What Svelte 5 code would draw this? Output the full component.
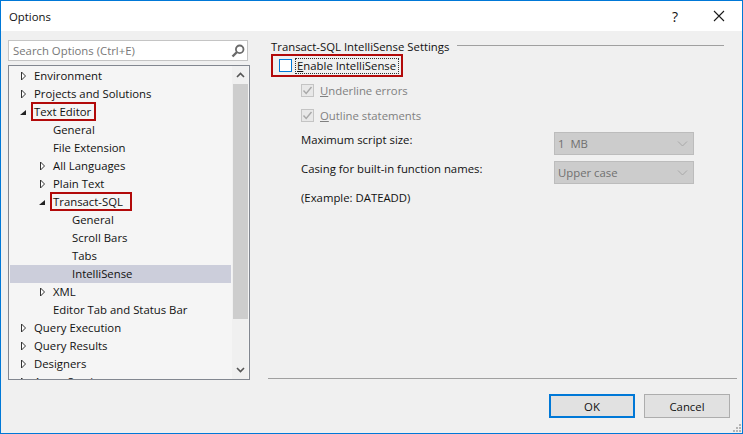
<script>
	const rows = [
		{ label: 'Environment', level: 0, arrow: 'closed' },
		{ label: 'Projects and Solutions', level: 0, arrow: 'closed' },
		{ label: 'Text Editor', level: 0, arrow: 'open', marked: true, pad: 3 },
		{ label: 'General', level: 1 },
		{ label: 'File Extension', level: 1 },
		{ label: 'All Languages', level: 1, arrow: 'closed' },
		{ label: 'Plain Text', level: 1, arrow: 'closed' },
		{ label: 'Transact-SQL', level: 1, arrow: 'open', marked: true, pad: 7 },
		{ label: 'General', level: 2 },
		{ label: 'Scroll Bars', level: 2 },
		{ label: 'Tabs', level: 2 },
		{ label: 'IntelliSense', level: 2, selected: true },
		{ label: 'XML', level: 1, arrow: 'closed' },
		{ label: 'Editor Tab and Status Bar', level: 1 },
		{ label: 'Query Execution', level: 0, arrow: 'closed' },
		{ label: 'Query Results', level: 0, arrow: 'closed' },
		{ label: 'Designers', level: 0, arrow: 'closed' },
		{ label: 'Azure Services', level: 0, arrow: 'closed' }
	];
</script>

<div class="dialog">
	<header class="titlebar">
		<span class="title">Options</span>
		<span class="help">?</span>
		<svg class="close" width="12" height="12" viewBox="0 0 12 12"><path d="M1 1 L11 11 M11 1 L1 11" stroke="#1a1a1a" stroke-width="1.1" fill="none" /></svg>
	</header>

	<div class="body">
		<aside class="left">
			<div class="search">
				<span>Search Options (Ctrl+E)</span>
				<svg width="14" height="14" viewBox="0 0 14 14"><circle cx="8.7" cy="5.3" r="3.8" fill="none" stroke="#6a6a6a" stroke-width="1.8" /><path d="M6 8 L1.5 12.5" stroke="#6a6a6a" stroke-width="2.4" /></svg>
			</div>
			<div class="tree">
				<div class="rows">
					{#each rows as row}
						<div class="row l{row.level}" class:selected={row.selected}>
							{#if row.arrow === 'closed'}
								<svg class="arrow" width="7" height="10" viewBox="0 0 7 10"><path d="M1.5 1 L5.5 5 L1.5 9 Z" fill="#fff" stroke="#333" /></svg>
							{:else if row.arrow === 'open'}
								<svg class="arrow" width="7" height="10" viewBox="0 0 7 10"><path d="M0 8 L6 8 L6 3 Z" fill="#222" /></svg>
							{/if}
							<span class="label" class:marked={row.marked} style={row.pad ? `padding-right: ${row.pad}px` : undefined}>{row.label}</span>
						</div>
					{/each}
				</div>
				<div class="scrollbar">
					<svg class="chev" width="9" height="6" viewBox="0 0 9 6"><path d="M1 5 L4.5 1.5 L8 5" fill="none" stroke="#555" stroke-width="1.6" /></svg>
					<div class="thumb"></div>
					<svg class="chev" width="9" height="6" viewBox="0 0 9 6"><path d="M1 1 L4.5 4.5 L8 1" fill="none" stroke="#555" stroke-width="1.6" /></svg>
				</div>
			</div>
		</aside>

		<main class="right">
			<div class="group-head">
				<span>Transact-SQL IntelliSense Settings</span>
				<div class="rule"></div>
			</div>
			<div class="enable">
				<span class="box active"></span>
				<span class="focus"><u>E</u>nable IntelliSense</span>
			</div>
			<div class="check">
				<span class="box">
					<svg width="11" height="11" viewBox="0 0 11 11"><path d="M1.5 5.5 L4.2 8.5 L9.5 2" fill="none" stroke="#a8a8a8" stroke-width="1.4" /></svg>
				</span>
				<span><u>U</u>nderline errors</span>
			</div>
			<div class="check second">
				<span class="box">
					<svg width="11" height="11" viewBox="0 0 11 11"><path d="M1.5 5.5 L4.2 8.5 L9.5 2" fill="none" stroke="#a8a8a8" stroke-width="1.4" /></svg>
				</span>
				<span><u>O</u>utline statements</span>
			</div>
			<div class="field first">
				<span>Maximum script size:</span>
				<div class="combo">
					<span>1&nbsp;&nbsp;MB</span>
					<svg width="11" height="6" viewBox="0 0 11 6"><path d="M1 0.5 L5.5 5 L10 0.5" fill="none" stroke="#a8a8a8" /></svg>
				</div>
			</div>
			<div class="field">
				<span>Casing for built-in function names:</span>
				<div class="combo">
					<span>Upper case</span>
					<svg width="11" height="6" viewBox="0 0 11 6"><path d="M1 0.5 L5.5 5 L10 0.5" fill="none" stroke="#a8a8a8" /></svg>
				</div>
			</div>
			<div class="example">(Example: DATEADD)</div>
		</main>
	</div>

	<div class="divider"></div>
	<footer class="buttons">
		<button class="default">OK</button>
		<button>Cancel</button>
	</footer>
	<svg class="grip" width="10" height="10" viewBox="0 0 10 10" fill="#b4b4b4">
		<rect x="7" y="1" width="2" height="2" /><rect x="4" y="4" width="2" height="2" /><rect x="7" y="4" width="2" height="2" /><rect x="1" y="7" width="2" height="2" /><rect x="4" y="7" width="2" height="2" /><rect x="7" y="7" width="2" height="2" />
	</svg>
</div>

<style>
	:global(body) {
		margin: 0;
	}

	.dialog {
		position: relative;
		box-sizing: border-box;
		width: 743px;
		height: 434px;
		border: 1px solid #0078d7;
		background: #f0f0f0;
		font-family: 'Open Sans', 'Noto Sans', sans-serif;
		font-size: 11.35px;
		color: #111;
		display: flex;
		flex-direction: column;
		overflow: hidden;
	}

	.titlebar {
		height: 30px;
		flex: none;
		background: #fff;
		display: flex;
		align-items: center;
		padding-left: 8px;
	}

	.title {
		flex: 1;
		margin-top: 1px;
	}

	.help {
		font-size: 14px;
		margin-right: 35px;
	}

	.close {
		margin-right: 17px;
	}

	.body {
		height: 347px;
		flex: none;
		display: flex;
	}

	.left {
		width: 242px;
		margin-left: 7px;
		padding-top: 9px;
		flex: none;
	}

	.search {
		box-sizing: border-box;
		width: 240px;
		height: 21px;
		background: #fff;
		border: 1px solid #c4c4c4;
		color: #777;
		display: flex;
		align-items: center;
		justify-content: space-between;
		padding: 0 2px 0 4px;
	}

	.tree {
		box-sizing: border-box;
		width: 242px;
		height: 315px;
		margin-top: 4px;
		border: 1px solid #828790;
		background: #f5f5f5;
		display: flex;
		overflow: hidden;
	}

	.rows {
		width: 221px;
		margin-left: 1px;
		padding-top: 1px;
		flex: none;
	}

	.row {
		position: relative;
		height: 18px;
		line-height: 18px;
		white-space: nowrap;
	}

	.row.selected {
		background: #cccedb;
	}

	.l0 { padding-left: 24px; }
	.l1 { padding-left: 43px; }
	.l2 { padding-left: 62px; }

	.arrow {
		position: absolute;
		top: 4px;
	}

	.l0 .arrow { left: 10px; }
	.l1 .arrow { left: 29px; }

	.marked {
		display: inline-block;
		height: 15px;
		line-height: 15px;
		padding-left: 1px;
		margin-left: -1px;
		outline: 2px solid #b20a0a;
	}

	.scrollbar {
		width: 16px;
		margin-left: 1px;
		flex: none;
		display: flex;
		flex-direction: column;
		align-items: center;
		background: #f0f0f0;
	}

	.chev {
		flex: none;
		margin: 6px 0;
	}

	.thumb {
		width: 15px;
		height: 235px;
		background: #cdcdcd;
		margin-bottom: auto;
	}

	.right {
		flex: 1;
		padding: 8px 0 0 21px;
	}

	.group-head {
		display: flex;
		align-items: center;
		justify-content: space-between;
		width: 453px;
		height: 14px;
	}

	.rule {
		width: 267px;
		height: 1px;
		background: #a0a0a0;
		margin-top: -2px;
	}

	.enable {
		box-sizing: border-box;
		width: 132px;
		height: 23px;
		margin-top: 1px;
		border: 2px solid #b20a0a;
		display: flex;
		align-items: center;
		padding-left: 6px;
		gap: 4px;
		white-space: nowrap;
	}

	.focus {
		outline: 1px dotted #333;
		line-height: 14px;
		padding: 0 2px 0 1px;
	}

	.box {
		box-sizing: border-box;
		width: 13px;
		height: 13px;
		flex: none;
		border: 1px solid #c4c4c4;
		background: #e8e8e8;
		display: flex;
		align-items: center;
		justify-content: center;
	}

	.box.active {
		border-color: #0078d7;
		background: #fff;
	}

	.check {
		display: flex;
		align-items: center;
		gap: 6px;
		margin: 4px 0 0 30px;
		height: 19px;
		color: #808080;
	}

	.check.second {
		margin-top: 6px;
	}

	.field {
		display: flex;
		align-items: flex-start;
		justify-content: space-between;
		width: 393px;
		margin: 6px 0 0 30px;
		height: 23px;
		line-height: 16px;
	}

	.field.first {
		margin-top: 7px;
	}

	.combo {
		box-sizing: border-box;
		width: 140px;
		height: 23px;
		background: #cccccc;
		border: 1px solid #bcbcbc;
		color: #707070;
		display: flex;
		align-items: center;
		justify-content: space-between;
		padding: 0 5px 0 3px;
	}

	.example {
		margin: 6px 0 0 30px;
		line-height: 16px;
	}

	.divider {
		width: 469px;
		height: 1px;
		flex: none;
		margin-left: 267px;
		background: #a0a0a0;
	}

	.buttons {
		display: flex;
		justify-content: flex-end;
		gap: 9px;
		padding: 15px 12px 0 0;
	}

	button {
		box-sizing: border-box;
		width: 86px;
		height: 24px;
		padding: 0;
		background: #e1e1e1;
		border: 1px solid #adadad;
		font: inherit;
		color: #111;
	}

	button.default {
		border: 2px solid #0078d7;
	}

	.grip {
		position: absolute;
		right: 0;
		bottom: 0;
	}
</style>
